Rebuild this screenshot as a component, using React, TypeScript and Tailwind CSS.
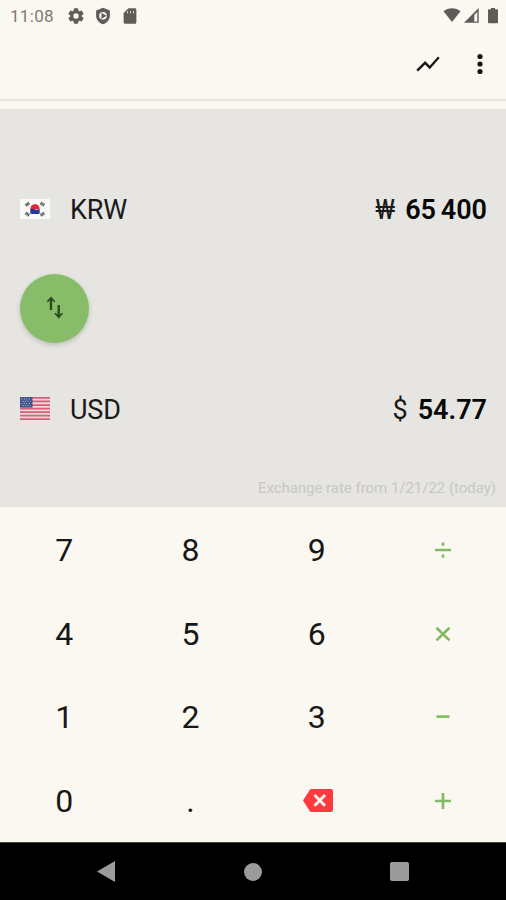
import type { ReactNode } from "react";

function Icon({ className, children }: { className: string; children: ReactNode }) {
  return (
    <svg viewBox="0 0 24 24" fill="currentColor" className={`shrink-0 ${className}`}>
      {children}
    </svg>
  );
}

function StatusBar() {
  return (
    <div className="flex h-8 items-center pl-[10px] pr-[5px] text-[#5e5d5a]">
      <span className="w-[57px] text-[17px] leading-8 tracking-[0.3px] text-[#7b7a77]">11:08</span>
      <Icon className="h-[18px] w-[18px]">
        <path
          stroke="currentColor"
          strokeWidth=".7"
          d="M19.43 12.98c.04-.32.07-.64.07-.98 0-.34-.03-.66-.07-.98l2.11-1.65c.19-.15.24-.42.12-.64l-2-3.46c-.09-.16-.26-.25-.44-.25-.06 0-.12.01-.17.03l-2.49 1c-.52-.4-1.08-.73-1.69-.98l-.38-2.65A.488.488 0 0 0 14 2h-4c-.25 0-.46.18-.49.42l-.38 2.65c-.61.25-1.17.59-1.69.98l-2.49-1a.57.57 0 0 0-.18-.03c-.17 0-.34.09-.43.25l-2 3.46c-.13.22-.07.49.12.64l2.11 1.65c-.04.32-.07.65-.07.98s.03.66.07.98l-2.11 1.65c-.19.15-.24.42-.12.64l2 3.46c.09.16.26.25.44.25.06 0 .12-.01.17-.03l2.49-1c.52.4 1.08.73 1.69.98l.38 2.65c.03.24.24.42.49.42h4c.25 0 .46-.18.49-.42l.38-2.65c.61-.25 1.17-.59 1.69-.98l2.49 1c.06.02.12.03.18.03.17 0 .34-.09.43-.25l2-3.46c.12-.22.07-.49-.12-.64l-2.11-1.65zM12 16a4 4 0 1 1 0-8 4 4 0 0 1 0 8z"
        />
      </Icon>
      <Icon className="ml-[9px] h-[18px] w-[18px]">
        <path
          fillRule="evenodd"
          d="M12 1 2.8 4.5v7.2c0 5.2 3.8 9.9 9.2 11.3 5.4-1.4 9.2-6.1 9.2-11.3V4.5L12 1zm0 5.7a5 5 0 1 1 0 10.2 5 5 0 0 1 0-10.2zM10 7.6v8.4l6.5-4.2z"
        />
      </Icon>
      <Icon className="ml-[9px] h-[18px] w-[18px]">
        <path
          fillRule="evenodd"
          d="M18.500 1.600H10L3.500 8v12.400c0 1.100.9 2 2 2h13c1.100 0 2-.9 2-2V3.600c0-1.100-.9-2-2-2zM9.300 5.500v2.800H8.200V5.500zm4 0v2.800h-1.100V5.500zm4 0v2.800h-1.100V5.500z"
        />
      </Icon>
      <svg viewBox="0 0 18 16" className="ml-auto h-4 w-[18px]" fill="currentColor">
        <path d="M.5 3.300C5-.8 13-.8 17.500 3.300L9 14z" />
      </svg>
      <svg viewBox="0 0 16 16" className="ml-[3px] h-4 w-4" fill="currentColor">
        <path fillRule="evenodd" d="M14.700 0v14.700H0zM13.300 4l-3 3v6.400h3z" />
      </svg>
      <svg viewBox="0 0 10 16" className="ml-2 mr-[3px] h-4 w-[10px]" fill="currentColor">
        <path d="M3 0h4v1.300h2q1 0 1 1v12q0 1-1 1H1q-1 0-1-1v-12q0-1 1-1h2z" />
      </svg>
    </div>
  );
}

function KoreanFlag() {
  return (
    <svg viewBox="0 0 30 20" className="mb-[3px] h-5 w-[30px]">
      <path fill="#fafafa" d="M0 0h30v20H0z" />
      <g stroke="#666" strokeWidth="3.2" strokeDasharray="1.3 .25">
        <path d="m5.600 6.500 3.800-2.600M20.600 3.900l3.800 2.600M5.600 13.900l3.800 2.600M20.600 16.500l3.800-2.600" />
      </g>
      <path fill="#e22932" d="M10.300 10.500a4.700 5.500 0 0 1 9.400 0z" />
      <path fill="#243a9d" d="M10.300 10q2.300-.8 4.700.5t4.700-.5v3.700q0 1.300-1.300 1.300h-6.800q-1.300 0-1.300-1.300z" />
    </svg>
  );
}

function AmericanFlag() {
  return (
    <svg viewBox="0 0 30 23" className="mb-[3px] h-[23px] w-[30px]">
      <path fill="#e8d8da" d="M0 0h30v23H0z" />
      <path stroke="#d56078" strokeWidth="1.75" d="M0 .9h30M0 4.4h30M0 8h30M0 11.5h30M0 15.1h30M0 18.6h30M0 22.1h30" />
      <path fill="#41548c" d="M0 0h12.500v10.600H0z" />
      <path stroke="#b9c2dc" strokeWidth="1" strokeDasharray="1 1.5" d="M1.5 2h10M2.7 4.2h8M1.5 6.4h10M2.7 8.6h8" />
    </svg>
  );
}

function CurrencyRow({ flag, code, symbol, amount }: { flag: ReactNode; code: string; symbol: string; amount: string }) {
  return (
    <div className="flex h-10 items-center pl-5 pr-[19px] text-[27px] leading-10 text-[#1a1a1a]">
      <span className="w-[50px]">{flag}</span>
      <span className="tracking-[-0.2px]">{code}</span>
      <span className="ml-auto mr-[10px]">{symbol}</span>
      <span className="font-semibold text-[#080808] [word-spacing:-2px]">{amount}</span>
    </div>
  );
}

const keys = ["7", "8", "9", "÷", "4", "5", "6", "×", "1", "2", "3", "−", "0", ".", "⌫", "+"];

const operatorPaths: Record<string, string> = {
  "÷": "M4 12h16M12 4.600v3.200M12 16.600v3.200",
  "×": "m5.500 5.800 13 12.600m0-12.600-13 12.600",
  "−": "M5.500 11.600h13",
  "+": "M4 12h16M12 4v16",
};

function Key({ label }: { label: string }) {
  if (label === "⌫") {
    return (
      <svg viewBox="0 0 30 23" className="mb-[2px] ml-[2px] h-[23px] w-[30px]">
        <path fill="#fb3b3f" d="M8.4 0H28q2 0 2 2v19q0 2-2 2H8.400q-1 0-1.700-1L0 11.500 6.700 1q.7-1 1.700-1z" />
        <path stroke="#fff6ef" strokeWidth="2.8" d="m11.500 6 10.500 10.800M22 6 11.500 16.800" />
      </svg>
    );
  }
  if (operatorPaths[label]) {
    return (
      <svg viewBox="0 0 24 24" className="h-6 w-6" fill="none" stroke="#80ba62" strokeWidth="2.6">
        <path d={operatorPaths[label]} />
      </svg>
    );
  }
  return <span>{label}</span>;
}

export default function App() {
  return (
    <div className="flex h-[900px] w-[506px] flex-col overflow-hidden bg-[#fbf8f1] font-['Roboto',sans-serif]">
      <StatusBar />
      <header className="flex h-[67px] items-center justify-end pr-[14px] text-[#151515]">
        <Icon className="mb-[3px] mr-[26px] h-[28px] w-[28px]">
          <path d="m3.500 18.490 6-6.010 4 4L22 6.920l-1.410-1.410-7.090 7.970-4-4L2 16.990z" />
        </Icon>
        <Icon className="mb-[3px] h-6 w-6">
          <circle cx="12" cy="4.5" r="2.6" />
          <circle cx="12" cy="12" r="2.6" />
          <circle cx="12" cy="19.5" r="2.6" />
        </Icon>
      </header>
      <div className="h-[10px] border-t-2 border-[#e5e3de]" />
      <main className="flex h-[398px] flex-col bg-[#e6e5e1] pt-[81px]">
        <CurrencyRow flag={<KoreanFlag />} code="KRW" symbol="₩" amount="65 400" />
        <button className="ml-5 mt-[44px] flex h-[69px] w-[69px] items-center justify-center rounded-full bg-[#87bd68] pb-[3px] text-[#2b4c20] shadow-[0_2px_5px_rgba(0,0,0,0.18)]">
          <svg viewBox="0 0 18 24" className="h-6 w-[18px]" fill="currentColor">
            <path d="M5 1.500 9.300 6.300 8.200 7.200 6.200 5.500V15H3.800V5.500L1.800 7.200.7 6.300zM12.700 23.500l4.300-4.800-1.100-.9-2 1.700V10h-2.400v9.500l-2-1.700-1.100.9z" />
          </svg>
        </button>
        <div className="mt-[47px]">
          <CurrencyRow flag={<AmericanFlag />} code="USD" symbol="$" amount="54.77" />
        </div>
        <p className="mt-auto pb-[9px] pr-[10px] text-right text-[15px] leading-5 tracking-[-0.03px] text-[#c8c7c4]">
          Exchange rate from 1/21/22 (today)
        </p>
      </main>
      <section className="grid h-[335px] grid-cols-4 grid-rows-[84px_83px_84px_84px] pl-px text-[32px] leading-10 text-[#171716]">
        {keys.map((key) => (
          <button key={key} className="flex items-center justify-center pt-[2px]">
            <Key label={key} />
          </button>
        ))}
      </section>
      <nav className="flex h-[58px] items-center justify-between border-t border-[#444] bg-black px-[97px] text-[#9b9b9b]">
        <svg viewBox="0 0 18 21" className="h-[21px] w-[18px]" fill="currentColor">
          <path d="M18 0v21L0 10.500z" />
        </svg>
        <span className="h-[18px] w-[18px] rounded-full bg-current" />
        <span className="h-[19px] w-[19px] rounded-[2px] bg-current" />
      </nav>
    </div>
  );
}
